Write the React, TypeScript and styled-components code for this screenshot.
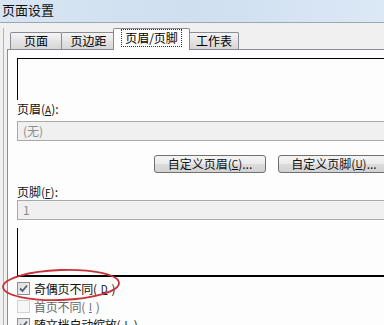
import React from "react";
import styled, { createGlobalStyle } from "styled-components";

const GlobalStyle = createGlobalStyle`
  html, body {
    margin: 0;
    padding: 0;
    width: 384px;
    height: 325px;
    overflow: hidden;
    background: #f0f0f0;
    font-family: "Noto Sans CJK SC", "DejaVu Sans", sans-serif;
    font-size: 12px;
    color: #000;
  }
`;

const Window = styled.div`
  position: relative;
  width: 384px;
  height: 325px;
  overflow: hidden;
  display: flex;
  flex-direction: column;
`;

const TitleBar = styled.div`
  height: 22px;
  flex: none;
  background: linear-gradient(90deg, #d7e5f3 0%, #cfdff0 50%, #dbe8f6 100%);
  border-bottom: 1px solid #9aa7b5;
  padding-left: 2px;
  font-size: 13px;
  line-height: 20px;
  color: #111;
`;

const Body = styled.div`
  flex: 1;
  padding: 5px 0 0 3px;
  background: #f0f0f0;
`;

const Frame = styled.div`
  height: 100%;
  border-left: 1px solid #b4b4b4;
  padding-left: 3px;
`;

const TabStrip = styled.div`
  display: flex;
  align-items: flex-end;
  height: 21px;
  padding-left: 3px;
`;

const Tab = styled.div<{ $w: number; $active?: boolean; $ml?: number }>`
  position: relative;
  box-sizing: border-box;
  width: ${(p) => p.$w}px;
  height: ${(p) => (p.$active ? 22 : 17)}px;
  margin-left: ${(p) => p.$ml ?? 0}px;
  margin-bottom: ${(p) => (p.$active ? -1 : 0)}px;
  z-index: ${(p) => (p.$active ? 2 : 1)};
  border: 1px solid #898c95;
  border-bottom: none;
  border-radius: 2px 2px 0 0;
  background: ${(p) =>
    p.$active ? "#fdfdfd" : "linear-gradient(#f4f4f4, #e4e4e4 50%, #d6d6d6)"};
  display: flex;
  align-items: center;
  justify-content: center;
  font-size: 12px;
  line-height: 14px;
  padding-bottom: ${(p) => (p.$active ? 3 : 0)}px;
`;

const Focus = styled.span`
  border: 1px dotted #333;
  padding: 1px 3px;
`;

const Panel = styled.div`
  width: 400px;
  height: 400px;
  box-sizing: border-box;
  background: #fdfdfd;
  border: 1px solid #898c95;
  padding: 8px 0 0 9px;
  display: flex;
  flex-direction: column;
`;

const Preview = styled.div<{ $h: number; $bottom?: boolean }>`
  box-sizing: border-box;
  height: ${(p) => p.$h}px;
  border-left: 1px solid #000;
  border-top: ${(p) => (p.$bottom ? "none" : "1px solid #000")};
  border-bottom: ${(p) => (p.$bottom ? "2px solid #000" : "none")};
  flex: none;
`;

const Label = styled.div<{ $mt: number }>`
  margin-top: ${(p) => p.$mt}px;
  height: 16px;
  line-height: 16px;
  font-size: 12px;
  color: #111;

  u {
    font-size: 10px;
  }
`;

const Combo = styled.div<{ $mt: number }>`
  box-sizing: border-box;
  margin-top: ${(p) => p.$mt}px;
  height: 20px;
  background: #f0f0f0;
  border: 1px solid #a9a9a9;
  border-right: none;
  padding-left: 5px;
  line-height: 18px;
  font-size: 12px;
  color: #8d8d8d;
`;

const ButtonRow = styled.div`
  display: flex;
  gap: 12px;
  margin-top: 14px;
  padding-left: 137px;
`;

const Button = styled.div`
  box-sizing: border-box;
  width: 112px;
  height: 18px;
  border: 1px solid #707070;
  border-radius: 3px;
  background: linear-gradient(#f4f4f4, #ebebeb 50%, #dcdcdc 51%, #d2d2d2);
  display: flex;
  align-items: center;
  justify-content: center;
  font-size: 12px;
  line-height: 14px;
  color: #111;
  white-space: nowrap;

  u {
    font-size: 10px;
  }
`;

const CheckList = styled.div`
  margin-top: 2px;
  display: flex;
  flex-direction: column;
`;

const CheckRow = styled.div<{ $faded?: boolean }>`
  display: flex;
  align-items: center;
  gap: 4px;
  height: 18px;
  font-size: 12px;
  letter-spacing: -0.2px;
  color: ${(p) => (p.$faded ? "#333" : "#111")};
  opacity: ${(p) => (p.$faded ? 0.75 : 1)};

  u {
    font-size: 10px;
  }
`;

const Box = styled.div<{ $faded?: boolean }>`
  box-sizing: border-box;
  width: 13px;
  height: 13px;
  border: 1px solid ${(p) => (p.$faded ? "#c4c4c4" : "#8e8f8f")};
  background: ${(p) =>
    p.$faded ? "#f6f6f6" : "linear-gradient(135deg, #dcdcdc, #f8f8f8)"};
  display: flex;
  align-items: center;
  justify-content: center;
`;

const Ellipse = styled.svg`
  position: absolute;
  left: 0;
  top: 266px;
  z-index: 5;
  pointer-events: none;
`;

const Check = () => (
  <svg width="9" height="9" viewBox="0 0 9 9">
    <path d="M1 4.5 L3.5 7 L8 1.5" fill="none" stroke="#4f5d6e" strokeWidth="1.8" />
  </svg>
);

export default function App() {
  return (
    <Window>
      <GlobalStyle />
      <TitleBar>页面设置</TitleBar>
      <Body>
        <Frame>
          <TabStrip>
            <Tab $w={52}>页面</Tab>
            <Tab $w={55} $ml={-1}>页边距</Tab>
            <Tab $w={77} $ml={-3} $active>
              <Focus>页眉/页脚</Focus>
            </Tab>
            <Tab $w={50} $ml={-1}>工作表</Tab>
          </TabStrip>
          <Panel>
            <Preview $h={42} />
            <Label $mt={1}>
              页眉(<u>A</u>):
            </Label>
            <Combo $mt={4}>(无)</Combo>
            <ButtonRow>
              <Button>
                自定义页眉(<u>C</u>)...
              </Button>
              <Button>
                自定义页脚(<u>U</u>)...
              </Button>
            </ButtonRow>
            <Label $mt={11}>
              页脚(<u>F</u>):
            </Label>
            <Combo $mt={0}>1</Combo>
            <Preview $h={49} $bottom style={{ marginTop: 8 }} />
            <CheckList>
              <CheckRow>
                <Box>
                  <Check />
                </Box>
                奇偶页不同(<u>D</u>)
              </CheckRow>
              <CheckRow $faded>
                <Box $faded />
                首页不同(<u>I</u>)
              </CheckRow>
              <CheckRow>
                <Box>
                  <Check />
                </Box>
                随文档自动缩放(<u>L</u>)
              </CheckRow>
            </CheckList>
          </Panel>
        </Frame>
      </Body>
      <Ellipse width="126" height="38" viewBox="0 0 126 38">
        <ellipse
          cx="61"
          cy="19"
          rx="58"
          ry="15"
          fill="none"
          stroke="#c8303a"
          strokeWidth="1.8"
          transform="rotate(-2 61 19)"
        />
      </Ellipse>
    </Window>
  );
}
